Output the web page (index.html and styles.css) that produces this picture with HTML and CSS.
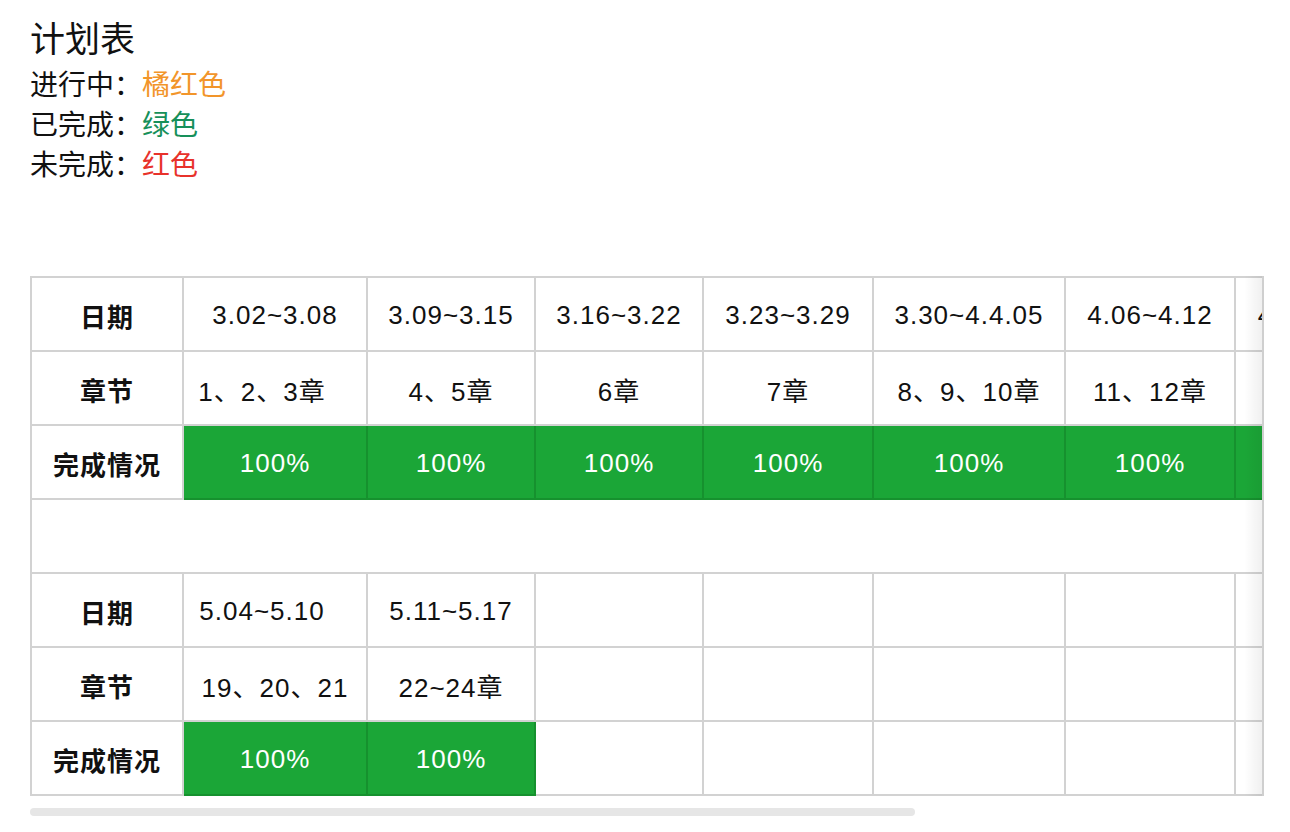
FILE: index.html
```html
<!DOCTYPE html>
<html lang="zh-CN">
<head>
<meta charset="utf-8">
<title>计划表</title>
<link rel="stylesheet" href="styles.css">
</head>
<body>
<div class="page">
  <h1 class="title">计划表</h1>
  <div class="legend">
    <div class="legend-row">进行中：<span class="orange">橘红色</span></div>
    <div class="legend-row">已完成：<span class="green">绿色</span></div>
    <div class="legend-row">未完成：<span class="red">红色</span></div>
  </div>

  <div class="scroller">
    <div class="viewport">
      <table class="plan">
        <colgroup>
          <col class="c1"><col class="c2"><col class="c3"><col class="c4"><col class="c5">
          <col class="c6"><col class="c7"><col class="c8"><col class="c9"><col class="c10">
        </colgroup>
        <tbody>
          <tr>
            <th>日期</th>
            <td>3.02~3.08</td>
            <td>3.09~3.15</td>
            <td>3.16~3.22</td>
            <td>3.23~3.29</td>
            <td>3.30~4.4.05</td>
            <td>4.06~4.12</td>
            <td>4.13~4.19</td>
            <td>4.20~4.26</td>
            <td>4.27~5.03</td>
          </tr>
          <tr>
            <th>章节</th>
            <td class="shift">1、2、3章</td>
            <td>4、5章</td>
            <td>6章</td>
            <td>7章</td>
            <td>8、9、10章</td>
            <td>11、12章</td>
            <td>13、14章</td>
            <td>15、16章</td>
            <td>17、18章</td>
          </tr>
          <tr>
            <th>完成情况</th>
            <td class="done">100%</td>
            <td class="done">100%</td>
            <td class="done">100%</td>
            <td class="done">100%</td>
            <td class="done">100%</td>
            <td class="done">100%</td>
            <td class="done">100%</td>
            <td class="done">100%</td>
            <td class="done">100%</td>
          </tr>
          <tr>
            <td class="spacer" colspan="10"></td>
          </tr>
          <tr>
            <th>日期</th>
            <td class="shift">5.04~5.10</td>
            <td>5.11~5.17</td>
            <td></td><td></td><td></td><td></td><td></td><td></td><td></td>
          </tr>
          <tr>
            <th>章节</th>
            <td>19、20、21</td>
            <td>22~24章</td>
            <td></td><td></td><td></td><td></td><td></td><td></td><td></td>
          </tr>
          <tr>
            <th>完成情况</th>
            <td class="done">100%</td>
            <td class="done">100%</td>
            <td></td><td></td><td></td><td></td><td></td><td></td><td></td>
          </tr>
        </tbody>
      </table>
      <div class="edge-shade"></div>
    </div>
    <div class="track"><div class="thumb"></div></div>
  </div>
</div>
</body>
</html>
```

FILE: styles.css
```css
html, body {
  margin: 0;
  padding: 0;
  background: #ffffff;
}

body {
  font-family: "Liberation Sans", "Noto Sans CJK SC", sans-serif;
  color: #111111;
}

.page {
  padding: 14px 0 0 30px;
}

.title {
  margin: 0;
  font-size: 35px;
  line-height: 52px;
  font-weight: normal;
  color: #111111;
}

.legend {
  display: flex;
  flex-direction: column;
}

.legend-row {
  font-size: 28px;
  line-height: 40px;
  color: #111111;
}

.orange { color: #f2952a; }
.green { color: #17905a; }
.red { color: #e8322b; }

.scroller {
  margin-top: 90px;
  width: 1234px;
}

.viewport {
  position: relative;
  overflow: hidden;
}

.plan {
  border-collapse: collapse;
  table-layout: fixed;
  width: 1721px;
  font-size: 26px;
  letter-spacing: 1px;
}

.c1 { width: 152px; }
.c2 { width: 184px; }
.c3 { width: 168px; }
.c4 { width: 168px; }
.c5 { width: 170px; }
.c6 { width: 192px; }
.c7 { width: 170px; }
.c8 { width: 171px; }
.c9 { width: 173px; }
.c10 { width: 173px; }

.plan th,
.plan td {
  height: 70px;
  padding: 2px 0 0;
  border: 2px solid #d2d2d2;
  text-align: center;
  vertical-align: middle;
  white-space: nowrap;
  color: #111111;
}

.plan th {
  font-weight: bold;
}

.plan td.shift {
  padding-right: 26px;
}

.plan td.done {
  background: #1ba637;
  color: #ffffff;
  border-color: #16912e;
}

.edge-shade {
  position: absolute;
  top: 0;
  right: 0;
  bottom: 0;
  width: 20px;
  background: linear-gradient(to right, rgba(0,0,0,0), rgba(0,0,0,0.06));
  border-right: 2px solid #cfcfcf;
  box-sizing: border-box;
}

.track {
  margin-top: 12px;
  height: 8px;
}

.thumb {
  width: 885px;
  height: 8px;
  border-radius: 4px;
  background: #e6e6e6;
}
```
